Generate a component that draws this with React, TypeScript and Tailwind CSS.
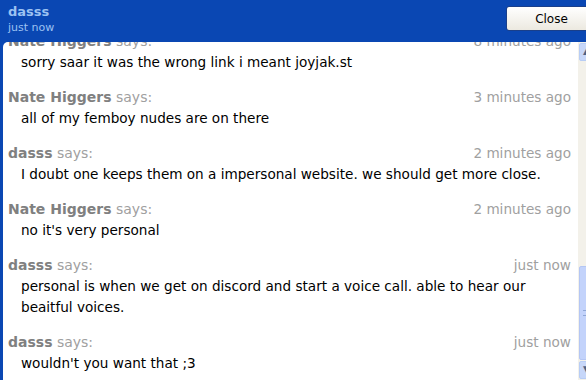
import React from "react";

type Msg = { name: string; time: string; lines: string[] };

const msgs: Msg[] = [
  { name: "Nate Higgers", time: "8 minutes ago", lines: ["sorry saar it was the wrong link i meant joyjak.st"] },
  { name: "Nate Higgers", time: "3 minutes ago", lines: ["all of my femboy nudes are on there"] },
  { name: "dasss", time: "2 minutes ago", lines: ["I doubt one keeps them on a impersonal website. we should get more close."] },
  { name: "Nate Higgers", time: "2 minutes ago", lines: ["no it's very personal"] },
  { name: "dasss", time: "just now", lines: ["personal is when we get on discord and start a voice call. able to hear our", "beaitful voices."] },
  { name: "dasss", time: "just now", lines: ["wouldn't you want that ;3"] },
];

export default function App() {
  return (
    <div
      className="w-[586px] h-[380px] overflow-hidden bg-[#0a47b3] flex flex-col"
      style={{ fontFamily: '"DejaVu Sans", Verdana, sans-serif' }}
    >
      <div className="h-[42px] flex justify-between shrink-0">
        <div className="pl-[8px] pt-[3px] text-[#9cc2f2]">
          <div className="text-[13px] font-bold leading-[18px]">dasss</div>
          <div className="text-[11px] leading-[14px]">just now</div>
        </div>
        <button className="mt-[6px] mr-[-11px] w-[91px] h-[25px] rounded-[3px] border border-[#1a3f8a] bg-gradient-to-b from-white to-[#ece9e0] text-[12px] text-black">
          Close
        </button>
      </div>
      <div className="flex-1 ml-[3px] w-[600px] bg-white rounded-tl-[5px] flex overflow-hidden">
        <div className="w-[575px] shrink-0 overflow-hidden">
          <div className="mt-[-12px] pr-[7px]">
            {msgs.map((m, i) => (
              <div key={i} className="mb-[13px]">
                <div className="flex justify-between items-center h-[22px] pl-[5px]">
                  <div className="text-[14px] text-[#808080]">
                    <span className="font-bold">{m.name}</span>{" "}
                    <span className="text-[#a0a0a0]">says:</span>
                  </div>
                  <div className="text-[13.6px] text-[#a0a0a0]">{m.time}</div>
                </div>
                <div className="pl-[18px] text-[13.6px] text-black leading-[21px]">
                  {m.lines.map((l, j) => (
                    <div key={j}>{l}</div>
                  ))}
                </div>
              </div>
            ))}
          </div>
        </div>
        <div className="w-[17px] shrink-0 bg-[#f3f1ea] flex flex-col">
          <div className="h-[18px] m-[1px] rounded-[2px] bg-[#c7d7f9] border border-[#b8cdf5] flex items-center justify-center text-[9px] text-[#4d6185]">▲</div>
          <div className="flex-1" />
          <div className="h-[94px] mx-[1px] rounded-[2px] bg-[#c3d3fb] border border-[#b4c6f3] flex items-center justify-center">
            <div className="w-[7px] h-[6px] border-y border-[#8fa6d6]" />
          </div>
          <div className="h-[18px] m-[1px] rounded-[2px] bg-[#c7d7f9] border border-[#b8cdf5] flex items-center justify-center text-[9px] text-[#4d6185]">▼</div>
        </div>
      </div>
    </div>
  );
}
